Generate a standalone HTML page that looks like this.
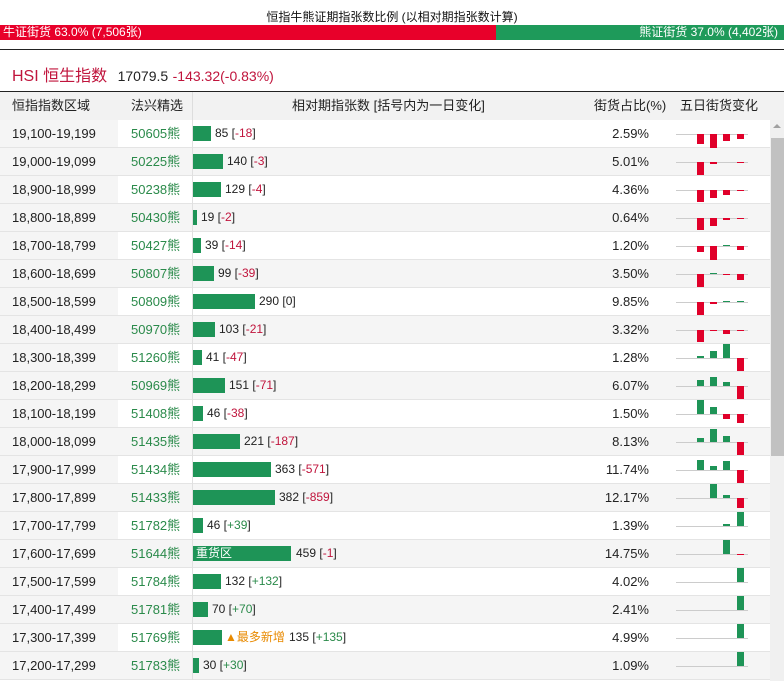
<!DOCTYPE html>
<html><head><meta charset="utf-8"><style>
*{margin:0;padding:0;box-sizing:border-box}
body{width:784px;height:681px;overflow:hidden;background:#fff;font-family:"Liberation Sans","Noto Sans CJK SC",sans-serif;font-size:12px;color:#222;position:relative}
.t{position:absolute;top:8px;left:0;width:784px;text-align:center;font-size:12px;color:#111}
.bar{position:absolute;top:25px;height:15px;color:#fff;font-size:12px;line-height:15px}
.hr{position:absolute;top:49px;left:0;width:784px;height:1px;background:#222}
.h1{position:absolute;top:62px;left:12px;font-size:16px;color:#c0143c}
.h1 b{font-weight:normal;color:#222;font-size:14px;margin-left:6px}
.h1 s{text-decoration:none;color:#c0143c;font-size:14px}
.hd{position:absolute;top:91px;left:0;width:784px;height:29px;background:#f2f2f2;border-top:1px solid #222;font-size:13px;color:#222;line-height:27px}
.hd span{position:absolute}
.r{position:absolute;left:0;width:770px;height:28px;border-bottom:1px solid #e4e4e4;background:#fff;line-height:27px;font-size:13px}
.r.g{background:#f5f5f5}
.r .c0{position:absolute;left:0;top:0;width:118px;height:27px;background:#f5f5f5}
.c1{position:absolute;left:12px}
.c2{position:absolute;left:131px;color:#2a8a4a}
.vl{position:absolute;left:192px;top:0;width:1px;height:28px;background:#e0e0e0}
.b{position:absolute;left:193px;top:6px;height:15px;background:#1e9457;color:#fff;font-style:normal;line-height:15px;font-size:12px;padding-left:3px;white-space:nowrap}
.n{position:absolute;font-size:12px}
.n em{font-style:normal;color:#c0143c}
.n u{text-decoration:none;color:#2a8a4a}
.p{position:absolute;right:121px}
.r svg{position:absolute;left:675px;top:0}
.sb{position:absolute;left:770px;top:120px;width:14px;height:561px;background:#f0f0f0}
.th{position:absolute;left:771px;top:138px;width:13px;height:318px;background:#c1c1c1}
.ar{position:absolute;left:773px;top:124px;width:0;height:0;border-left:4px solid transparent;border-right:4px solid transparent;border-bottom:4px solid #a0a0a0}
.new{position:absolute;color:#e88a00;font-size:12px}
</style></head><body>
<div class="t">恒指牛熊证期指张数比例 (以相对期指张数计算)</div>
<div class="bar" style="left:0;width:496px;background:#e8002a;padding-left:3px">牛证街货 63.0% (7,506张)</div>
<div class="bar" style="left:496px;width:288px;background:#1e9a5a;text-align:right;padding-right:6px">熊证街货 37.0% (4,402张)</div>
<div class="hr"></div>
<div class="h1">HSI 恒生指数 <b>17079.5</b> <s>-143.32(-0.83%)</s></div>
<div class="hd"><span style="left:12px">恒指指数区域</span><span style="left:131px">法兴精选</span><span style="left:192px;top:0;width:1px;height:28px;background:#ddd"></span><span style="left:292px">相对期指张数 [括号内为一日变化]</span><span style="left:594px">街货占比(%)</span><span style="left:680px">五日街货变化</span></div>

<div class="r" style="top:120px"><div class="c0"></div><span class="c1">19,100-19,199</span><span class="c2">50605熊</span><div class="vl"></div><i class="b" style="width:18px"></i><span class="n" style="left:215px">85 [<em>-18</em>]</span><span class="p">2.59%</span><svg width="75" height="28"><line x1="1" y1="14.5" x2="73" y2="14.5" stroke="#ccc"/><rect x="22" y="14" width="7" height="10" fill="#e0002a"/><rect x="35" y="14" width="7" height="14" fill="#e0002a"/><rect x="48" y="14" width="7" height="7" fill="#e0002a"/><rect x="62" y="14" width="7" height="5" fill="#e0002a"/></svg></div>
<div class="r g" style="top:148px"><span class="c1">19,000-19,099</span><span class="c2">50225熊</span><div class="vl"></div><i class="b" style="width:30px"></i><span class="n" style="left:227px">140 [<em>-3</em>]</span><span class="p">5.01%</span><svg width="75" height="28"><line x1="1" y1="14.5" x2="73" y2="14.5" stroke="#ccc"/><rect x="22" y="14" width="7" height="13" fill="#e0002a"/><rect x="35" y="14" width="7" height="2" fill="#e0002a"/><rect x="62" y="14" width="7" height="1" fill="#e0002a"/></svg></div>
<div class="r" style="top:176px"><div class="c0"></div><span class="c1">18,900-18,999</span><span class="c2">50238熊</span><div class="vl"></div><i class="b" style="width:28px"></i><span class="n" style="left:225px">129 [<em>-4</em>]</span><span class="p">4.36%</span><svg width="75" height="28"><line x1="1" y1="14.5" x2="73" y2="14.5" stroke="#ccc"/><rect x="22" y="14" width="7" height="12" fill="#e0002a"/><rect x="35" y="14" width="7" height="8" fill="#e0002a"/><rect x="48" y="14" width="7" height="5" fill="#e0002a"/><rect x="62" y="14" width="7" height="1" fill="#e0002a"/></svg></div>
<div class="r g" style="top:204px"><span class="c1">18,800-18,899</span><span class="c2">50430熊</span><div class="vl"></div><i class="b" style="width:4px"></i><span class="n" style="left:201px">19 [<em>-2</em>]</span><span class="p">0.64%</span><svg width="75" height="28"><line x1="1" y1="14.5" x2="73" y2="14.5" stroke="#ccc"/><rect x="22" y="14" width="7" height="12" fill="#e0002a"/><rect x="35" y="14" width="7" height="8" fill="#e0002a"/><rect x="48" y="14" width="7" height="2" fill="#e0002a"/><rect x="62" y="14" width="7" height="1" fill="#e0002a"/></svg></div>
<div class="r" style="top:232px"><div class="c0"></div><span class="c1">18,700-18,799</span><span class="c2">50427熊</span><div class="vl"></div><i class="b" style="width:8px"></i><span class="n" style="left:205px">39 [<em>-14</em>]</span><span class="p">1.20%</span><svg width="75" height="28"><line x1="1" y1="14.5" x2="73" y2="14.5" stroke="#ccc"/><rect x="22" y="14" width="7" height="6" fill="#e0002a"/><rect x="35" y="14" width="7" height="14" fill="#e0002a"/><rect x="48" y="13" width="7" height="1" fill="#1e9457"/><rect x="62" y="14" width="7" height="4" fill="#e0002a"/></svg></div>
<div class="r g" style="top:260px"><span class="c1">18,600-18,699</span><span class="c2">50807熊</span><div class="vl"></div><i class="b" style="width:21px"></i><span class="n" style="left:218px">99 [<em>-39</em>]</span><span class="p">3.50%</span><svg width="75" height="28"><line x1="1" y1="14.5" x2="73" y2="14.5" stroke="#ccc"/><rect x="22" y="14" width="7" height="13" fill="#e0002a"/><rect x="35" y="13" width="7" height="1" fill="#1e9457"/><rect x="48" y="14" width="7" height="1" fill="#e0002a"/><rect x="62" y="14" width="7" height="6" fill="#e0002a"/></svg></div>
<div class="r" style="top:288px"><div class="c0"></div><span class="c1">18,500-18,599</span><span class="c2">50809熊</span><div class="vl"></div><i class="b" style="width:62px"></i><span class="n" style="left:259px">290 [0]</span><span class="p">9.85%</span><svg width="75" height="28"><line x1="1" y1="14.5" x2="73" y2="14.5" stroke="#ccc"/><rect x="22" y="14" width="7" height="13" fill="#e0002a"/><rect x="35" y="14" width="7" height="2" fill="#e0002a"/><rect x="48" y="13" width="7" height="1" fill="#1e9457"/><rect x="62" y="13" width="7" height="1" fill="#1e9457"/></svg></div>
<div class="r g" style="top:316px"><span class="c1">18,400-18,499</span><span class="c2">50970熊</span><div class="vl"></div><i class="b" style="width:22px"></i><span class="n" style="left:219px">103 [<em>-21</em>]</span><span class="p">3.32%</span><svg width="75" height="28"><line x1="1" y1="14.5" x2="73" y2="14.5" stroke="#ccc"/><rect x="22" y="14" width="7" height="12" fill="#e0002a"/><rect x="35" y="14" width="7" height="1" fill="#e0002a"/><rect x="48" y="14" width="7" height="4" fill="#e0002a"/><rect x="62" y="14" width="7" height="1" fill="#e0002a"/></svg></div>
<div class="r" style="top:344px"><div class="c0"></div><span class="c1">18,300-18,399</span><span class="c2">51260熊</span><div class="vl"></div><i class="b" style="width:9px"></i><span class="n" style="left:206px">41 [<em>-47</em>]</span><span class="p">1.28%</span><svg width="75" height="28"><line x1="1" y1="14.5" x2="73" y2="14.5" stroke="#ccc"/><rect x="22" y="12" width="7" height="2" fill="#1e9457"/><rect x="35" y="7" width="7" height="7" fill="#1e9457"/><rect x="48" y="0" width="7" height="14" fill="#1e9457"/><rect x="62" y="14" width="7" height="13" fill="#e0002a"/></svg></div>
<div class="r g" style="top:372px"><span class="c1">18,200-18,299</span><span class="c2">50969熊</span><div class="vl"></div><i class="b" style="width:32px"></i><span class="n" style="left:229px">151 [<em>-71</em>]</span><span class="p">6.07%</span><svg width="75" height="28"><line x1="1" y1="14.5" x2="73" y2="14.5" stroke="#ccc"/><rect x="22" y="8" width="7" height="6" fill="#1e9457"/><rect x="35" y="5" width="7" height="9" fill="#1e9457"/><rect x="48" y="10" width="7" height="4" fill="#1e9457"/><rect x="62" y="14" width="7" height="13" fill="#e0002a"/></svg></div>
<div class="r" style="top:400px"><div class="c0"></div><span class="c1">18,100-18,199</span><span class="c2">51408熊</span><div class="vl"></div><i class="b" style="width:10px"></i><span class="n" style="left:207px">46 [<em>-38</em>]</span><span class="p">1.50%</span><svg width="75" height="28"><line x1="1" y1="14.5" x2="73" y2="14.5" stroke="#ccc"/><rect x="22" y="0" width="7" height="14" fill="#1e9457"/><rect x="35" y="7" width="7" height="7" fill="#1e9457"/><rect x="48" y="14" width="7" height="5" fill="#e0002a"/><rect x="62" y="14" width="7" height="9" fill="#e0002a"/></svg></div>
<div class="r g" style="top:428px"><span class="c1">18,000-18,099</span><span class="c2">51435熊</span><div class="vl"></div><i class="b" style="width:47px"></i><span class="n" style="left:244px">221 [<em>-187</em>]</span><span class="p">8.13%</span><svg width="75" height="28"><line x1="1" y1="14.5" x2="73" y2="14.5" stroke="#ccc"/><rect x="22" y="10" width="7" height="4" fill="#1e9457"/><rect x="35" y="1" width="7" height="13" fill="#1e9457"/><rect x="48" y="8" width="7" height="6" fill="#1e9457"/><rect x="62" y="14" width="7" height="13" fill="#e0002a"/></svg></div>
<div class="r" style="top:456px"><div class="c0"></div><span class="c1">17,900-17,999</span><span class="c2">51434熊</span><div class="vl"></div><i class="b" style="width:78px"></i><span class="n" style="left:275px">363 [<em>-571</em>]</span><span class="p">11.74%</span><svg width="75" height="28"><line x1="1" y1="14.5" x2="73" y2="14.5" stroke="#ccc"/><rect x="22" y="4" width="7" height="10" fill="#1e9457"/><rect x="35" y="10" width="7" height="4" fill="#1e9457"/><rect x="48" y="5" width="7" height="9" fill="#1e9457"/><rect x="62" y="14" width="7" height="13" fill="#e0002a"/></svg></div>
<div class="r g" style="top:484px"><span class="c1">17,800-17,899</span><span class="c2">51433熊</span><div class="vl"></div><i class="b" style="width:82px"></i><span class="n" style="left:279px">382 [<em>-859</em>]</span><span class="p">12.17%</span><svg width="75" height="28"><line x1="1" y1="14.5" x2="73" y2="14.5" stroke="#ccc"/><rect x="35" y="0" width="7" height="14" fill="#1e9457"/><rect x="48" y="11" width="7" height="3" fill="#1e9457"/><rect x="62" y="14" width="7" height="10" fill="#e0002a"/></svg></div>
<div class="r" style="top:512px"><div class="c0"></div><span class="c1">17,700-17,799</span><span class="c2">51782熊</span><div class="vl"></div><i class="b" style="width:10px"></i><span class="n" style="left:207px">46 [<u>+39</u>]</span><span class="p">1.39%</span><svg width="75" height="28"><line x1="1" y1="14.5" x2="73" y2="14.5" stroke="#ccc"/><rect x="48" y="12" width="7" height="2" fill="#1e9457"/><rect x="62" y="0" width="7" height="14" fill="#1e9457"/></svg></div>
<div class="r g" style="top:540px"><span class="c1">17,600-17,699</span><span class="c2">51644熊</span><div class="vl"></div><i class="b" style="width:98px">重货区</i><span class="n" style="left:296px">459 [<em>-1</em>]</span><span class="p">14.75%</span><svg width="75" height="28"><line x1="1" y1="14.5" x2="73" y2="14.5" stroke="#ccc"/><rect x="48" y="0" width="7" height="14" fill="#1e9457"/><rect x="62" y="14" width="7" height="1" fill="#e0002a"/></svg></div>
<div class="r" style="top:568px"><div class="c0"></div><span class="c1">17,500-17,599</span><span class="c2">51784熊</span><div class="vl"></div><i class="b" style="width:28px"></i><span class="n" style="left:225px">132 [<u>+132</u>]</span><span class="p">4.02%</span><svg width="75" height="28"><line x1="1" y1="14.5" x2="73" y2="14.5" stroke="#ccc"/><rect x="62" y="0" width="7" height="14" fill="#1e9457"/></svg></div>
<div class="r g" style="top:596px"><span class="c1">17,400-17,499</span><span class="c2">51781熊</span><div class="vl"></div><i class="b" style="width:15px"></i><span class="n" style="left:212px">70 [<u>+70</u>]</span><span class="p">2.41%</span><svg width="75" height="28"><line x1="1" y1="14.5" x2="73" y2="14.5" stroke="#ccc"/><rect x="62" y="0" width="7" height="14" fill="#1e9457"/></svg></div>
<div class="r" style="top:624px"><div class="c0"></div><span class="c1">17,300-17,399</span><span class="c2">51769熊</span><div class="vl"></div><i class="b" style="width:29px"></i><span class="new" style="left:225px">▲最多新增</span><span class="n" style="left:289px">135 [<u>+135</u>]</span><span class="p">4.99%</span><svg width="75" height="28"><line x1="1" y1="14.5" x2="73" y2="14.5" stroke="#ccc"/><rect x="62" y="0" width="7" height="14" fill="#1e9457"/></svg></div>
<div class="r g" style="top:652px"><span class="c1">17,200-17,299</span><span class="c2">51783熊</span><div class="vl"></div><i class="b" style="width:6px"></i><span class="n" style="left:203px">30 [<u>+30</u>]</span><span class="p">1.09%</span><svg width="75" height="28"><line x1="1" y1="14.5" x2="73" y2="14.5" stroke="#ccc"/><rect x="62" y="0" width="7" height="14" fill="#1e9457"/></svg></div>

<div class="sb"></div><div class="th"></div><div class="ar"></div>
</body></html>
